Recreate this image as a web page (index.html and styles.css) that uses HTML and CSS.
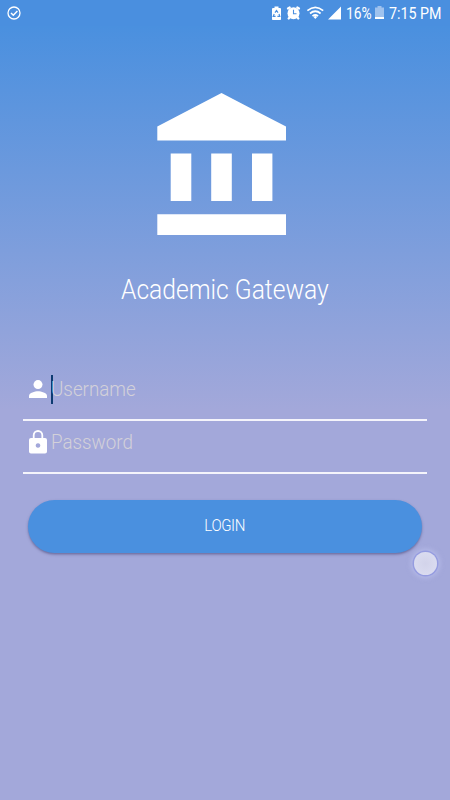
FILE: index.html
```html
<!DOCTYPE html>
<html lang="en">
<head>
<meta charset="utf-8">
<title>Academic Gateway</title>
<link rel="stylesheet" href="styles.css">
</head>
<body>
<div class="screen">
  <header class="status">
    <svg class="check" width="14" height="14" viewBox="0 0 14 14" fill="none" stroke="#fff"><circle cx="7" cy="7" r="6" stroke-width="1.3"/><path d="M4 7l2.3 2.2L10.4 5" stroke-width="1.5"/></svg>
    <svg class="status-icons" width="70" height="16" viewBox="0 0 70 16">
      <path fill="#fff" d="M2 2h1.500V.5h4V2H9q1 0 1 1v10.200q0 .8-.8.8H1.800q-.8 0-.8-.8V3q0-1 1-1z"/>
      <path fill="none" stroke="#4a8fdf" stroke-width="1.200" d="M4 6.700l1.500-2.200L7 6.700M8 8l.8 2.400H6.400M4.600 10.400H2.200L3.200 8"/>
      <circle cx="22.500" cy="7.300" r="6" fill="#fff"/>
      <path stroke="#fff" stroke-width="2.200" stroke-linecap="round" d="M17 2.500l1.700-1M28 2.500l-1.700-1M18.500 11.500l-.8 1M26.500 11.500l.8 1"/>
      <path fill="none" stroke="#4a8fdf" stroke-width="1.100" d="M22.500 3.800v4h3"/>
      <g fill="none" stroke="#fff" stroke-width="1.700"><path d="M36.400 4.600q7.900-6.600 15.800 0"/><path d="M39 7.500q5.300-4.500 10.600 0"/><path d="M41.500 10.200q2.800-2.400 5.600 0"/></g>
      <path fill="#fff" d="M42.500 11l1.800-1.300L46.100 11l-1.800 2zM57 13.500H70V.5z"/>
    </svg>
    <span class="percent">16%</span>
    <svg class="battery" width="9" height="14" viewBox="0 0 9 14"><path fill="#9fc2ee" d="M0 1.500h2.500V0h4v1.500H9V11H0z"/><path fill="#fff" d="M0 11h9v2H0z"/></svg>
    <span class="time">7:15 PM</span>
  </header>
  <main class="content">
    <svg class="logo" width="129" height="142" viewBox="0 0 129 142" fill="#fff"><path d="M64.500 0L129 33.500V47.500H0.300V33.500zM13.700 60.500h20.600V108H13.700zM54.200 60.500h20.600V108H54.200zM95 60.500h20.400V108H95zM0.300 121.300h128.700V142H0.300z"/></svg>
    <h1 class="title"><span>Academic Gateway</span></h1>
    <form class="form">
      <div class="field">
        <svg class="icon user" width="18" height="18" viewBox="0 0 18 18" fill="#fff"><circle cx="9" cy="4.600" r="4.500"/><path d="M0 18v-2.300c0-3 6-4.500 9-4.500s9 1.500 9 4.500V18z"/></svg>
        <i class="caret"></i>
        <span class="placeholder username">Username</span>
      </div>
      <div class="field">
        <svg class="icon" width="18" height="24" viewBox="0 0 18 24"><path fill="#fff" fill-rule="evenodd" d="M2 8h1.800V5.300a5.200 5.200 0 0 1 10.400 0V8H16q2 0 2 2v11.500q0 2-2 2H2q-2 0-2-2V10q0-2 2-2zm3.600 0h6.800V5.300a3.400 3.400 0 0 0-6.800 0zM9 13.200a2.300 2.300 0 1 0 .01 0z"/></svg>
        <i class="caret hidden"></i>
        <span class="placeholder password">Password</span>
      </div>
      <button class="login" type="button"><span>LOGIN</span></button>
    </form>
  </main>
  <i class="touch"></i>
</div>
</body>
</html>
```
FILE: styles.css
```css
* { box-sizing: border-box; }
body { margin: 0; background: #4a8fdf; font-family: Roboto, "Liberation Sans", sans-serif; }
.screen {
  position: relative;
  width: 450px;
  height: 800px;
  overflow: hidden;
  background: linear-gradient(#4a90df 26px, #a3a8da 410px);
}
.status {
  display: flex;
  align-items: flex-start;
  height: 26px;
  padding: 6px 9px 0 7px;
  background: #4a8fdf;
  color: #fff;
  font-size: 16px;
  line-height: 16px;
}
.status-icons { margin-left: 250px; }
.percent, .time { white-space: nowrap; transform-origin: left; }
.percent { width: 25px; margin-left: 5px; transform: scaleX(.86); }
.battery { margin-left: 4px; }
.time { width: 52px; margin-left: 5px; transform: scaleX(.89); }
.content { display: flex; flex-direction: column; align-items: center; padding: 67px 23px 0; }
.logo { margin-right: 7px; }
.title {
  margin: 35px 0 0;
  height: 40px;
  color: #fff;
  font-size: 27px;
  font-weight: 300;
  line-height: 40px;
  white-space: nowrap;
}
.title span { display: inline-block; transform: scaleX(.912); }
.form { width: 404px; margin-top: 57px; }
.field {
  display: flex;
  align-items: center;
  height: 53px;
  padding: 0 5px 9px 6px;
  border-bottom: 2px solid #f4f4fb;
}
.field:first-child { height: 54px; padding-bottom: 0; align-items: flex-start; }
.icon { flex: none; }
.user { margin-top: 13px; }
.caret { width: 2px; height: 29px; margin: 8px 0 0 4px; background: #0d3b71; }
.hidden { visibility: hidden; margin-top: 0; }
.placeholder {
  margin-left: -2px;
  color: #d3d1d9;
  font-size: 20px;
  font-weight: 300;
  line-height: 28px;
  transform: scaleX(.94);
  transform-origin: left;
}
.username { margin-top: 8px; }
.login {
  display: block;
  width: 394px;
  height: 53px;
  margin: 26px 0 0 5px;
  padding: 0 0 2px;
  border: 0;
  border-radius: 27px;
  background: #4a90df;
  box-shadow: 0 1.5px 2.5px rgba(55, 50, 100, .5);
  color: #fff;
  font: 300 16px/51px Roboto, sans-serif;
  letter-spacing: -.4px;
}
.login span { display: inline-block; transform: scaleX(.94); }
.touch {
  position: absolute;
  left: 414px;
  top: 552px;
  width: 23px;
  height: 23px;
  border-radius: 50%;
  background: radial-gradient(#d2d3ea, #dddff2);
  box-shadow: 0 0 0 1.5px #959ce0, 0 0 5px 3px rgba(190, 195, 240, .65);
}
```
